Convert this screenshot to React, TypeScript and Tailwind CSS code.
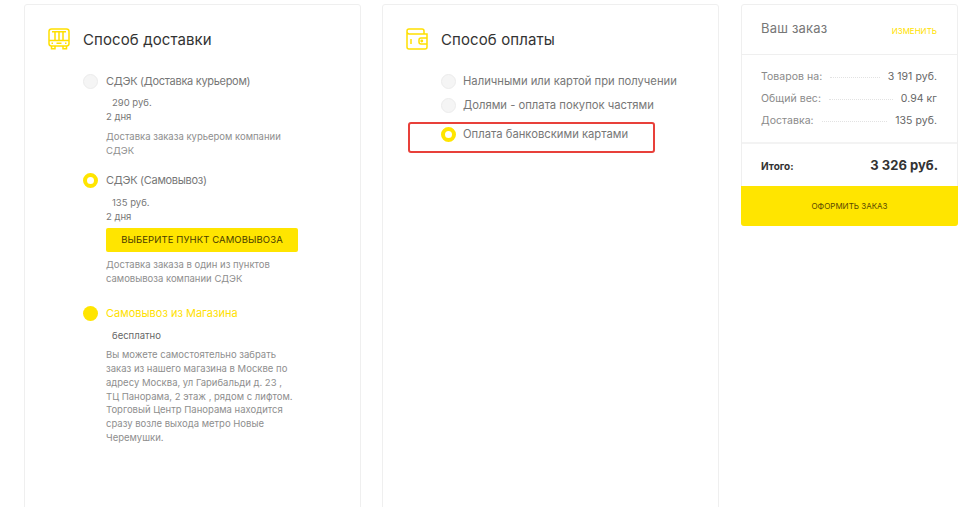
import React from 'react';

const FONT = "font-['Inter','Noto_Sans',sans-serif]";

function Radio({ state }: { state: 'off' | 'on' | 'full' }) {
  if (state === 'full') return <span className="block w-[15px] h-[15px] rounded-full bg-[#ffe500] shrink-0" />;
  if (state === 'on') return <span className="block w-[15px] h-[15px] rounded-full bg-white border-[4px] border-[#ffe500] shrink-0" />;
  return <span className="block w-[15px] h-[15px] rounded-full bg-[#f5f5f5] border border-[#ececec] shrink-0" />;
}

function BusIcon() {
  return (
    <svg width="22" height="22" viewBox="0 0 22 22" fill="none" stroke="#ffe000" strokeWidth="1.5" className="shrink-0">
      <rect x="1" y="1" width="20" height="17" rx="2.5" />
      <path d="M1 12.5H21M7 3.8V12.5M15 3.8V12.5M4 3.8H18M11 3.8V12.5" />
      <path d="M8.5 15.3H13.5M3.5 15.3H5M17 15.3H18.5" />
      <path d="M3.5 18V20.8H7V18M15 18V20.8H18.5V18" />
    </svg>
  );
}

function WalletIcon() {
  return (
    <svg width="22" height="22" viewBox="0 0 22 22" fill="none" stroke="#ffe000" strokeWidth="1.5" className="shrink-0">
      <path d="M18 6V3C18 1.9 17.1 1 16 1H3C1.9 1 1 1.9 1 3V19C1 20.1 1.9 21 3 21H19C20.1 21 21 20.1 21 19V6H3.2C2 6 1 5 1 3.5" />
      <path d="M21 10H15C13.9 10 13 10.9 13 12V14C13 15.1 13.9 16 15 16H21" />
      <path d="M5 11V16" />
      <circle cx="15.8" cy="13" r="0.7" />
    </svg>
  );
}

function Row({ label, value }: { label: string; value: string }) {
  return (
    <div className="flex items-center h-[22px] text-[10.5px] tracking-[0.05px] text-[#8a8a8a]">
      <span>{label}</span>
      <span className="mx-[8px] border-t border-dotted border-[#e2e2e2] flex-1" />
      <span className="text-[#666]">{value}</span>
    </div>
  );
}

export default function App() {
  return (
    <div className={`${FONT} relative h-[507px] w-[974px] overflow-hidden bg-white flex items-start gap-[21px] pl-[24px] pt-[4px]`}>
      {/* delivery */}
      <div className="w-[337px] h-[600px] border border-[#efefef] rounded-[3px] pl-[23px] pt-[23px]">
        <div className="flex items-center gap-[13px] h-[22px]">
          <BusIcon />
          <span className="mt-[2px] text-[15px] text-[#333] tracking-[0.1px]">Способ доставки</span>
        </div>
        <div className="pl-[35px] pt-[23px] w-[265px]">
          <div className="flex items-center gap-[8px] h-[16px]">
            <Radio state="off" />
            <span className="text-[11px] tracking-[-0.3px] text-[#777]">СДЭК (Доставка курьером)</span>
          </div>
          <div className="pl-[23px]">
            <p className="pl-[6px] mt-[7px] text-[9.5px] leading-[14px] text-[#777]">290 руб.</p>
            <p className="text-[9.5px] leading-[14px] text-[#777]">2 дня</p>
            <p className="mt-[6px] text-[9.5px] leading-[14px] text-[#8e8e8e] w-[190px]">Доставка заказа курьером компании СДЭК</p>
          </div>
          <div className="flex items-center gap-[8px] h-[16px] mt-[14px]">
            <Radio state="on" />
            <span className="text-[11px] tracking-[-0.3px] text-[#777]">СДЭК (Самовывоз)</span>
          </div>
          <div className="pl-[23px]">
            <p className="pl-[6px] mt-[8px] text-[9.5px] leading-[14px] text-[#777]">135 руб.</p>
            <p className="text-[9.5px] leading-[14px] text-[#777]">2 дня</p>
            <button className="mt-[4px] w-[192px] h-[24px] bg-[#ffe500] rounded-[2px] text-[9.5px] text-[#4a3c00] tracking-[0.1px]">ВЫБЕРИТЕ ПУНКТ САМОВЫВОЗА</button>
            <p className="mt-[6px] text-[9.5px] leading-[14px] text-[#8e8e8e] w-[190px]">Доставка заказа в один из пунктов самовывоза компании СДЭК</p>
          </div>
          <div className="flex items-center gap-[8px] h-[16px] mt-[19px]">
            <Radio state="full" />
            <span className="text-[11px] text-[#ffe100]">Самовывоз из Магазина</span>
          </div>
          <div className="pl-[23px]">
            <p className="pl-[6px] mt-[8px] text-[9.5px] leading-[14px] text-[#666]">бесплатно</p>
            <p className="mt-[5px] text-[9.5px] leading-[13.85px] text-[#8e8e8e] w-[190px]">
              Вы можете самостоятельно забрать заказ из нашего магазина в Москве по адресу Москва, ул Гарибальди д. 23 , ТЦ Панорама, 2 этаж , рядом с лифтом. Торговый Центр Панорама находится сразу возле выхода метро Новые Черемушки.
            </p>
          </div>
        </div>
      </div>

      {/* payment */}
      <div className="w-[337px] h-[600px] border border-[#efefef] rounded-[3px] pl-[23px] pt-[23px]">
        <div className="flex items-center gap-[13px] h-[22px]">
          <WalletIcon />
          <span className="mt-[2px] text-[15px] text-[#333] tracking-[0.1px]">Способ оплаты</span>
        </div>
        <div className="pl-[35px] pt-[23px] flex flex-col">
          <div className="flex items-center gap-[7px] h-[16px]">
            <Radio state="off" />
            <span className="text-[11.25px] text-[#777]">Наличными или картой при получении</span>
          </div>
          <div className="flex items-center gap-[7px] h-[16px] mt-[8px]">
            <Radio state="off" />
            <span className="text-[11.25px] text-[#777]">Долями - оплата покупок частями</span>
          </div>
          <div className="flex items-center gap-[7px] h-[16px] mt-[13px]">
            <Radio state="on" />
            <span className="text-[11.25px] text-[#777]">Оплата банковскими картами</span>
          </div>
        </div>
      </div>

      {/* order */}
      <div className="ml-px w-[217px] h-[222px] border border-[#efefef] rounded-[3px] flex flex-col">
        <div className="h-[50px] shrink-0 flex items-center justify-between pl-[19px] pr-[20px] border-b border-[#efefef]">
          <span className="mb-[2px] text-[13px] text-[#777] tracking-[0.2px]">Ваш заказ</span>
          <span className="text-[8px] text-[#ffe100] mt-[2px]">ИЗМЕНИТЬ</span>
        </div>
        <div className="h-[89px] shrink-0 pl-[19px] pr-[20px] pt-[11px] border-b-2 border-[#f3f3f3]">
          <Row label="Товаров на:" value="3 191 руб." />
          <Row label="Общий вес:" value="0.94 кг" />
          <Row label="Доставка:" value="135 руб." />
        </div>
        <div className="flex-1 flex items-center justify-between pl-[19px] pr-[19px] pt-[2px]">
          <span className="text-[10px] font-bold text-[#333]">Итого:</span>
          <span className="text-[13px] font-bold text-[#333]">3 326 руб.</span>
        </div>
        <button className="h-[40px] shrink-0 -mx-px -mb-px bg-[#ffe500] rounded-b-[3px] text-[8px] text-[#5a4a00]">ОФОРМИТЬ ЗАКАЗ</button>
      </div>

      {/* red annotation */}
      <div className="absolute left-[408px] top-[122px] w-[247px] h-[31px] border-2 border-[#e8403a] rounded-[3px]" />
    </div>
  );
}
